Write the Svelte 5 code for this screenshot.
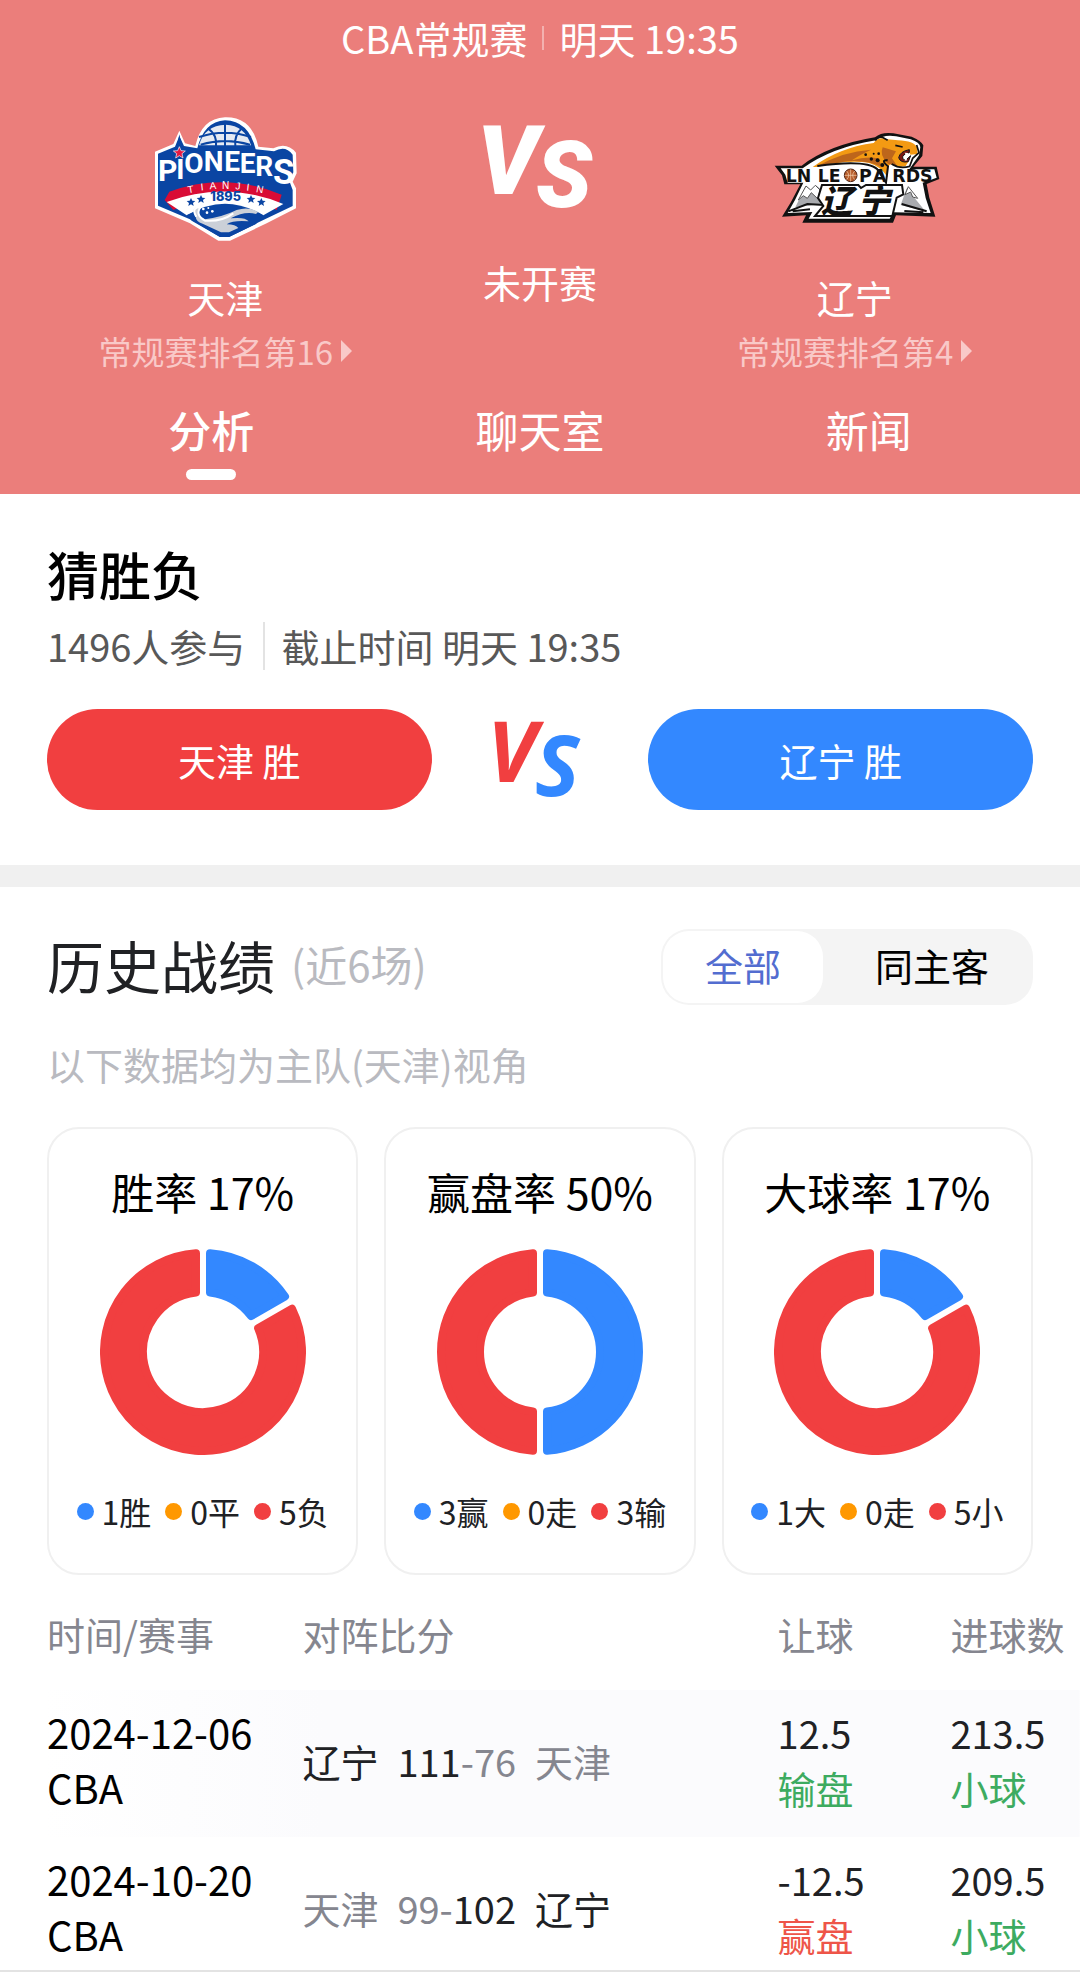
<script>
    let tab = "分析";
    let range = "全部";

    const tabs = ["分析", "聊天室", "新闻"];
    const ranges = ["全部", "同主客"];

    const BLUE = "#3388ff";
    const ORANGE = "#ff9800";
    const RED = "#f13f40";

    const cards = [
        { title: "胜率 17%", items: [[1, "胜"], [0, "平"], [5, "负"]] },
        { title: "赢盘率 50%", items: [[3, "赢"], [0, "走"], [3, "输"]] },
        { title: "大球率 17%", items: [[1, "大"], [0, "走"], [5, "小"]] },
    ];
    const colors = [BLUE, ORANGE, RED];

    const games = [
        { date: "2024-12-06", league: "CBA", home: "辽宁", away: "天津", hs: 111, as: 76, spread: "12.5", spreadResult: "输盘", total: "213.5", totalResult: "小球" },
        { date: "2024-10-20", league: "CBA", home: "天津", away: "辽宁", hs: 99, as: 102, spread: "-12.5", spreadResult: "赢盘", total: "209.5", totalResult: "小球" },
    ];

    // The outline stroke rounds the corners, so the shape itself is inset by 4.
    const OUTER = 99;
    const INNER = 60;
    const EDGE = 7;

    const point = (r, a) => `${r * Math.sin(a)} ${-r * Math.cos(a)}`;

    const slice = (from, to) => {
        const o = Math.asin(EDGE / OUTER);
        const i = Math.asin(EDGE / INNER);
        const large = to - from > Math.PI ? 1 : 0;
        const largeInner = to - from - 2 * i > Math.PI ? 1 : 0;
        return `M${point(OUTER, from + o)} A${OUTER} ${OUTER} 0 ${large} 1 ${point(OUTER, to - o)} L${point(INNER, to - i)} A${INNER} ${INNER} 0 ${largeInner} 0 ${point(INNER, from + i)}Z`;
    };

    const slices = (items) => {
        const sum = items.reduce((n, item) => n + item[0], 0);
        let at = 0;
        const result = [];
        items.forEach(([count], n) => {
            if (count === 0) return;
            const end = at + (count / sum) * Math.PI * 2;
            // an exact half must not be treated as the large arc
            result.push({ d: slice(at, end - 0.0001), color: colors[n] });
            at = end;
        });
        return result;
    };
</script>

<main>
    <header>
        <p class="match-info">CBA常规赛 <span class="bar"></span> 明天 19:35</p>
        <div class="teams">
            <div class="team">
                <svg width="190" height="160" viewBox="0 0 570 480" role="img" aria-label="天津先行者">
                    <path d="M75 155L130 132L148 92L165 130L196 138Q215 55 285 52Q365 50 385 140L430 145Q470 125 498 158L500 220L488 245L498 265V325L410 370L300 422H265L180 370L75 325Z" fill="#fff" />
                    <path d="M84 161L135 140L148 108L162 138L202 145Q222 65 285 61Q355 62 377 148L432 154Q466 135 488 164L490 217L478 243L488 270V318L400 360L297 411H270L185 360L84 317Z" fill="#0a45a3" />
                    <path d="M207 136Q223 76 287 74Q345 76 363 136Z" fill="#e6eaf2" />
                    <path d="M285 72V138M207 111Q285 85 363 111M234 85Q262 105 258 138M336 85Q312 105 316 138M212 134Q285 112 360 134" fill="none" stroke="#0a45a3" stroke-width="6" />
                    <path d="M118 275Q285 214 455 284L440 330Q285 250 130 330L104 300Z" fill="#d90c35" />
                    <path d="M110 306Q285 240 460 312L400 346Q285 285 170 346Z" fill="#fff" />
                    <path d="M170 346Q285 276 400 346L378 372L297 411H270L185 362Z" fill="#0a45a3" />
                    <path d="M197 348Q180 322 208 320Q199 348 225 358Q280 350 320 330Q356 318 384 336L378 342Q345 332 302 355Q345 350 356 364Q310 360 290 373Q318 374 325 384L297 397H273L218 371Q197 365 197 348Z" fill="#cbd0d8" />
                    <path d="M199 350Q182 322 212 321Q194 345 225 362Q275 366 310 340" fill="none" stroke="#fff" stroke-width="6" />
                    <path d="M183 294l4 8 9 1-7 6 2 9-8-5-8 5 2-9-7-6 9-1ZM213 285l4 8 9 1-7 6 2 9-8-5-8 5 2-9-7-6 9-1ZM363 285l4 8 9 1-7 6 2 9-8-5-8 5 2-9-7-6 9-1ZM394 294l4 8 9 1-7 6 2 9-8-5-8 5 2-9-7-6 9-1Z" fill="#0a45a3" />
                    <g fill="#fff"><circle cx="220" cy="327" r="4" /><circle cx="235" cy="324" r="3" /><circle cx="231" cy="338" r="4" /><circle cx="247" cy="334" r="4" /></g>
                    <g class="pioneers" fill="#fff">
                        <text x="113" y="243" font-size="90">P</text>
                        <text x="151" y="236" font-size="84">I</text>
                        <text x="192" y="218" font-size="84">O</text>
                        <text x="251" y="214" font-size="84">N</text>
                        <text x="306" y="214" font-size="84">E</text>
                        <text x="353" y="218" font-size="84">E</text>
                        <text x="403" y="228" font-size="84">R</text>
                        <text x="461" y="252" font-size="104">S</text>
                    </g>
                    <path d="M148 103L156 143L175 158L161 173H135L122 158L140 143Z" fill="#0a45a3" />
                    <path d="M148 140l5 12 13 1-10 8 3 13-11-7-11 7 3-13-10-8 13-1Z" fill="#e31a44" stroke="#fff" stroke-width="2" />
                    <g class="place" fill="#fff">
                        <text x="184" y="278" transform="rotate(-10 184 278)">T</text>
                        <text x="217" y="271" transform="rotate(-6 217 271)">I</text>
                        <text x="249" y="267" transform="rotate(-3 249 267)">A</text>
                        <text x="287" y="266">N</text>
                        <text x="323" y="268" transform="rotate(4 323 268)">J</text>
                        <text x="353" y="272" transform="rotate(6 353 272)">I</text>
                        <text x="388" y="278" transform="rotate(10 388 278)">N</text>
                    </g>
                    <text class="year" x="287" y="303" fill="#0a45a3">1895</text>
                </svg>
                <h2>天津</h2>
                <a href="#rank">常规赛排名第16<svg class="arrow" width="11" height="22" viewBox="0 0 11 22" aria-hidden="true"><path d="M0 0L11 11L0 22Z" fill="currentColor" /></svg></a>
            </div>
            <div class="team">
                <svg class="vs-white" width="160" height="160" viewBox="460 100 160 160" role="img" aria-label="VS">
                    <text x="477" y="194" font-size="96" fill="#fff">V</text>
                    <text x="536" y="207" font-size="92" fill="#fff">S</text>
                </svg>
                <p class="status">未开赛</p>
            </div>
            <div class="team">
                <svg width="220" height="160" viewBox="-15 -30 660 480" role="img" aria-label="辽宁本钢">
                    <path d="M74 167H155Q235 105 375 82Q395 65 430 70L485 80Q515 93 520 106L517 138L490 170H560L568 207L530 222L538 263L556 320L438 316L429 338H157L168 316L96 320L123 276L151 223H103L96 196Z" fill="#111" />
                    <path d="M92 175L158 175Q245 112 378 91Q400 73 438 79L482 88Q510 97 511 112L507 136L478 178H553L560 203L518 218L527 264L542 309L430 307L419 326H176L187 306L113 309L135 270L160 218H113L106 194Z" fill="#fff" />
                    <path d="M166 230L136 292L210 283L216 240L198 226L184 242ZM470 235L526 304L452 285Z" fill="#a9abaf" />
                    <path d="M168 228L145 270L160 257L172 265L184 248L204 267L210 240L196 226L182 240ZM475 230L465 254L482 246L488 261L503 265Z" fill="#fff" stroke="#555" stroke-width="3" />
                    <path d="M115 304L172 282L235 286M180 298L128 304M530 304L455 282M463 303L520 307" fill="none" stroke="#111" stroke-width="6" />
                    <path d="M188 171Q270 112 371 99Q385 78 412 88L444 91Q492 93 501 112L503 132L481 134L478 119Q450 124 446 143Q452 160 475 155L467 168Q439 176 426 158L413 170V202Q394 169 355 158Q285 149 202 171Z" fill="#f39a13" />
                    <path d="M201 169Q280 124 363 119Q323 138 306 151Q350 138 384 145L397 172Q350 149 291 154ZM398 112Q387 137 414 161L442 169L426 145L438 124Z" fill="#bd661b" />
                    <path d="M376 92Q381 80 397 82L413 91M500 105L507 128L488 145L479 169Q450 178 425 162M436 106L458 111" fill="none" stroke="#111" stroke-width="5" />
                    <path d="M478 119Q450 124 446 143Q452 160 475 155L482 137L469 149Q457 151 458 140Q462 129 478 128Z" fill="#7a1714" stroke="#111" stroke-width="3" />
                    <path d="M464 128l6 11 5-10M464 152l2-10 6 9" fill="#fff" />
                    <g fill="#111"><circle cx="347" cy="134" r="4" /><circle cx="364" cy="147" r="5" /><circle cx="386" cy="131" r="4" /><circle cx="383" cy="151" r="6" /><circle cx="397" cy="165" r="6" /><circle cx="371" cy="131" r="3" /></g>
                    <path d="M202 168Q350 148 382 178L408 218L414 169Q390 149 413 151" fill="none" stroke="#111" stroke-width="6" />
                    <g class="leopards" fill="#111">
                        <text x="107" y="217">LN</text>
                        <text x="203" y="217">LE</text>
                        <text x="327" y="217">P</text>
                        <text x="369" y="217">A</text>
                        <text x="427" y="217">RDS</text>
                    </g>
                    <circle cx="302" cy="196" r="19" fill="#b65c2a" stroke="#4b2316" stroke-width="3" />
                    <path d="M302 178V214M284 196H320M290 183Q302 196 290 209M314 183Q302 196 314 209" fill="none" stroke="#f6d6b4" stroke-width="2" />
                    <path d="M216 225H325L333 234L348 225H456L460 253L440 263L427 318H195L220 288L204 264Z" fill="#fff" stroke="#111" stroke-width="6" />
                    <g class="liaoning" fill="#111">
                        <text x="212" y="308">辽</text>
                        <text x="324" y="308">宁</text>
                    </g>
                </svg>
                <h2>辽宁</h2>
                <a href="#rank">常规赛排名第4<svg class="arrow" width="11" height="22" viewBox="0 0 11 22" aria-hidden="true"><path d="M0 0L11 11L0 22Z" fill="currentColor" /></svg></a>
            </div>
        </div>
        <nav>
            {#each tabs as name}
                <button class:active={tab === name} on:click={() => (tab = name)}>{name}</button>
            {/each}
        </nav>
    </header>

    <section class="guess">
        <h1>猜胜负</h1>
        <p class="guess-info"><span>1496人参与</span><span>截止时间 明天 19:35</span></p>
        <div class="vote">
            <button class="home">天津 胜</button>
            <svg class="vs-color" width="130" height="130" viewBox="474 694 130 130" role="img" aria-label="VS">
                <text x="486" y="781" fill={RED}>V</text>
                <text x="534" y="795" fill={BLUE}>S</text>
            </svg>
            <button class="away">辽宁 胜</button>
        </div>
    </section>

    <section class="history">
        <div class="history-head">
            <h1>历史战绩 <small>(近6场)</small></h1>
            <div class="switch">
                {#each ranges as name}
                    <button class:active={range === name} on:click={() => (range = name)}>{name}</button>
                {/each}
            </div>
        </div>
        <p class="note">以下数据均为主队(天津)视角</p>
        <div class="cards">
            {#each cards as card}
                <div class="card">
                    <h3>{card.title}</h3>
                    <svg width="206" height="206" viewBox="-103 -103 206 206" aria-hidden="true">
                        {#each slices(card.items) as s}
                            <path d={s.d} fill={s.color} stroke={s.color} stroke-width="8" stroke-linejoin="round" />
                        {/each}
                    </svg>
                    <ul>
                        {#each card.items as [count, label], n}
                            <li><i style="background: {colors[n]}"></i>{count}{label}</li>
                        {/each}
                    </ul>
                </div>
            {/each}
        </div>
    </section>

    <table>
        <thead>
            <tr>
                <th class="when">时间/赛事</th>
                <th class="score">对阵比分</th>
                <th class="spread">让球</th>
                <th class="total">进球数</th>
            </tr>
        </thead>
        <tbody>
            {#each games as game}
                <tr>
                    <td class="when">{game.date}<br />{game.league}</td>
                    <td>
                        <div class="result">
                            <span class:lost={game.hs < game.as}>{game.home}</span>
                            <span><span class:lost={game.hs < game.as}>{game.hs}</span><span class="lost">-</span><span class:lost={game.as < game.hs}>{game.as}</span></span>
                            <span class:lost={game.as < game.hs}>{game.away}</span>
                        </div>
                    </td>
                    <td>{game.spread}<br /><span class={game.spreadResult === "赢盘" ? "red" : "green"}>{game.spreadResult}</span></td>
                    <td>{game.total}<br /><span class="green">{game.totalResult}</span></td>
                </tr>
            {/each}
        </tbody>
    </table>
</main>

<style>
    :global(body) {
        background: #fff;
    }

    main {
        font-family: "Noto Sans CJK SC", sans-serif;
        font-size: 38px;
        line-height: 48px;
        color: #202124;
    }

    h1, h2, h3, p, ul {
        margin: 0;
        padding: 0;
        font-weight: 400;
    }

    button {
        border: 0;
        padding: 0;
        background: none;
        font: inherit;
        color: inherit;
        cursor: pointer;
    }

    svg {
        display: block;
    }

    header {
        background: #eb7e7b;
        color: #fff;
        padding: 14px 0;
    }

    .match-info {
        display: flex;
        justify-content: center;
        align-items: center;
    }

    .bar {
        width: 2px;
        height: 24px;
        margin: 0 15px;
        background: #f3b1af;
    }

    .teams {
        display: grid;
        grid-template-columns: repeat(3, 1fr);
        padding: 0 68px;
        margin-top: 38px;
    }

    .team {
        display: flex;
        flex-direction: column;
        align-items: center;
    }

    .team h2 {
        font-size: 38px;
        line-height: 48px;
        margin-top: 13px;
    }

    .team a {
        display: flex;
        align-items: center;
        gap: 8px;
        margin-top: 6px;
        font-size: 33px;
        white-space: nowrap;
        color: #f9c9c8;
        text-decoration: none;
    }

    .status {
        margin-top: -2px;
    }

    .pioneers {
        font-family: Roboto, sans-serif;
        font-weight: 700;
        text-anchor: middle;
    }

    .place {
        font: 30px "Liberation Sans", sans-serif;
        text-anchor: middle;
    }

    .year {
        font: 800 38px Inter, sans-serif;
        text-anchor: middle;
    }

    .leopards {
        font: 700 52px "DejaVu Sans", sans-serif;
    }

    .liaoning {
        font: italic 900 96px "Noto Sans CJK SC", sans-serif;
    }

    .vs-white {
        font-family: Roboto, sans-serif;
        font-style: italic;
        font-weight: 900;
    }

    .vs-color {
        font: italic 700 84px "Open Sans", sans-serif;
        margin: -15px 0;
    }

    nav {
        display: grid;
        grid-template-columns: repeat(3, 1fr);
        padding: 0 47px;
        margin-top: 26px;
    }

    nav button {
        display: flex;
        flex-direction: column;
        align-items: center;
        gap: 12px;
        font-size: 43px;
        line-height: 56px;
    }

    nav button.active {
        font-weight: 500;
    }

    nav button::after {
        content: "";
        width: 50px;
        height: 11px;
        border-radius: 6px;
    }

    nav button.active::after {
        background: #fff;
    }

    .guess {
        padding: 48px 47px 55px;
        border-bottom: 22px solid #f0f0f0;
    }

    .guess h1 {
        font-size: 52px;
        line-height: 64px;
        font-weight: 500;
        color: #000;
    }

    .guess-info {
        display: flex;
        margin-top: 16px;
        color: #585858;
    }

    .guess-info span + span {
        margin-left: 18px;
        padding-left: 16px;
        border-left: 2px solid #e3e3e3;
    }

    .vote {
        display: flex;
        align-items: center;
        justify-content: space-between;
        margin-top: 39px;
    }

    .vote button {
        width: 39%;
        height: 101px;
        border-radius: 51px;
        color: #fff;
    }

    .home {
        background: #f13f40;
    }

    .away {
        background: #3388ff;
    }

    .history {
        padding: 42px 47px 0;
    }

    .history-head {
        display: flex;
        justify-content: space-between;
        align-items: flex-start;
    }

    .history h1 {
        display: flex;
        align-items: center;
        gap: 16px;
        font-size: 57px;
        line-height: 70px;
    }

    .history small {
        font-size: 42px;
        color: #b9bac0;
    }

    .switch {
        display: flex;
        padding: 2px;
        border-radius: 28px;
        background: #f4f4f4;
        color: #000;
    }

    .switch button {
        padding: 10px 42px 14px 52px;
        border-radius: 26px;
        line-height: 48px;
    }

    .switch button.active {
        padding: 10px 42px 14px;
        background: #fff;
        color: #536dd0;
    }

    .note {
        margin-top: 35px;
        color: #b9bac0;
    }

    .cards {
        display: grid;
        grid-template-columns: repeat(3, 1fr);
        gap: 26px;
        margin-top: 39px;
    }

    .card {
        display: flex;
        flex-direction: column;
        align-items: center;
        padding: 34px 0 38px;
        border: 2px solid #f0f0f0;
        border-radius: 32px;
    }

    .card h3 {
        font-size: 43px;
        line-height: 56px;
        margin-bottom: 30px;
        color: #000;
    }

    .card ul {
        display: flex;
        gap: 14px;
        margin-top: 32px;
        font-size: 32px;
        white-space: nowrap;
        list-style: none;
    }

    .card li {
        display: flex;
        align-items: center;
        gap: 8px;
    }

    .card i {
        width: 17px;
        height: 17px;
        border-radius: 50%;
    }

    table {
        width: 100%;
        table-layout: fixed;
        border-collapse: collapse;
        line-height: 55px;
        border-bottom: 2px solid #e3e3e3;
    }

    th, td {
        padding: 15px 0 22px;
        font-weight: 400;
        text-align: left;
        white-space: nowrap;
    }

    th {
        padding: 31px 0 29px;
        color: #85868f;
    }

    .when {
        width: 28%;
        padding-left: 47px;
        box-sizing: border-box;
    }

    td.when {
        font-size: 40px;
        color: #000;
    }

    .score {
        width: 44%;
    }

    .spread {
        width: 16%;
    }

    .total {
        width: 12%;
    }

    tbody tr:nth-child(odd) {
        background: linear-gradient(90deg, #fff 4%, #fbfbfd 30%);
    }

    tbody tr:last-child td {
        padding-bottom: 8px;
    }

    .result {
        display: flex;
        gap: 19px;
    }

    .lost {
        color: #85868f;
    }

    .green {
        color: #3dab60;
    }

    .red {
        color: #ee5549;
    }
</style>
